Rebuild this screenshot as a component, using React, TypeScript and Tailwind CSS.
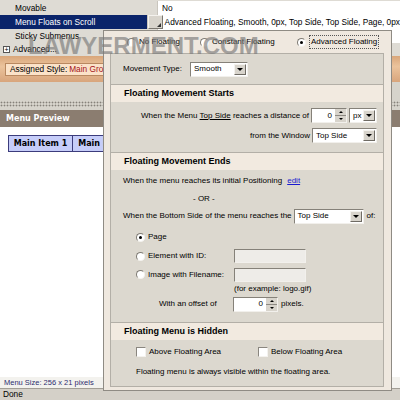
import React from "react";

// Sunken white radio dot, classic Windows look
function Radio({ checked }: { checked?: boolean }) {
  return (
    <span className="relative inline-block h-[9px] w-[9px] shrink-0 rounded-full border border-[#7f7b74] border-b-[#f4f2ee] border-r-[#f4f2ee] bg-white">
      {checked && (
        <span className="absolute left-[2px] top-[2px] h-[3px] w-[3px] rounded-full bg-black" />
      )}
    </span>
  );
}

function Checkbox() {
  return (
    <span className="inline-block h-[10px] w-[10px] shrink-0 border border-[#8a867f] border-b-[#f4f2ee] border-r-[#f4f2ee] bg-white" />
  );
}

function Arrow({ up }: { up?: boolean }) {
  return up ? (
    <span className="h-0 w-0 border-x-[2px] border-b-[2px] border-x-transparent border-b-black" />
  ) : (
    <span className="h-0 w-0 border-x-[3px] border-t-[3px] border-x-transparent border-t-black" />
  );
}

function Select({ value, className }: { value: string; className: string }) {
  return (
    <div
      className={`flex h-[15px] items-center border border-[#858179] border-b-[#f2f0ec] border-r-[#f2f0ec] bg-white ${className}`}
    >
      <span className="flex-1 truncate pl-[3px]">{value}</span>
      <span className="mr-[1px] flex h-[11px] w-[12px] items-center justify-center border border-[#f4f2ee] border-b-[#6f6b64] border-r-[#6f6b64] bg-[#d8d4cc]">
        <Arrow />
      </span>
    </div>
  );
}

function Spin({ className }: { className: string }) {
  return (
    <div
      className={`flex h-[15px] items-center border border-[#858179] border-b-[#f2f0ec] border-r-[#f2f0ec] bg-white ${className}`}
    >
      <span className="flex-1 pr-[3px] text-right">0</span>
      <span className="flex h-full w-[11px] flex-col bg-[#d8d4cc]">
        <span className="flex flex-1 items-center justify-center border-b border-[#8e8a83]">
          <Arrow up />
        </span>
        <span className="flex flex-1 items-center justify-center">
          <span className="h-0 w-0 border-x-[2px] border-t-[2px] border-x-transparent border-t-black" />
        </span>
      </span>
    </div>
  );
}

function TextBox() {
  return (
    <div className="h-[14px] w-[72px] border border-[#858179] border-b-[#f2f0ec] border-r-[#f2f0ec] bg-[#eeece8]" />
  );
}

function SectionHeader({ title }: { title: string }) {
  return (
    <div className="flex h-[18px] items-center border-t border-[#b3afa7] bg-[#f2eae0] pl-[13px] text-[9px] font-bold">
      {title}
    </div>
  );
}

function FloatingPopup() {
  return (
    <div className="absolute left-[103px] top-[30px] flex h-[361px] w-[289px] flex-col border border-[#8f8b84] bg-[#efe8df] text-[8px] text-black">
      {/* mode radios */}
      <div className="flex h-[22px] items-center pl-[23px]">
        <div className="flex w-[73px] items-center gap-[3px]">
          <Radio />
          <span>No Floating</span>
        </div>
        <div className="flex w-[97px] items-center gap-[3px]">
          <Radio />
          <span>Constant Floating</span>
        </div>
        <div className="flex items-center gap-[3px]">
          <Radio checked />
          <span className="border border-dotted border-[#555] px-[1px]">Advanced Floating</span>
        </div>
      </div>

      <div className="ml-[6px] mr-[7px] flex h-[334px] flex-col border border-[#b3afa7] bg-[#dcd8cf]">
        <div className="flex h-[30px] items-center pl-[12px]">
          <span className="w-[67px]">Movement Type:</span>
          <Select value="Smooth" className="w-[58px]" />
        </div>

        <SectionHeader title="Floating Movement Starts" />
        <div className="flex h-[50px] flex-col items-end gap-[5px] pr-[6px] pt-[6px]">
          <div className="flex items-center">
            <span className="mr-[2px]">
              When the Menu <span className="underline">Top Side</span> reaches a distance of
            </span>
            <Spin className="w-[36px]" />
            <Select value="px" className="ml-[2px] w-[28px]" />
          </div>
          <div className="flex items-center">
            <span className="mr-[2px]">from the Window</span>
            <Select value="Top Side" className="w-[65px]" />
          </div>
        </div>

        <SectionHeader title="Floating Movement Ends" />
        <div className="flex h-[152px] flex-col pl-[12px]">
          <div className="flex h-[22px] items-center">
            When the menu reaches its initial Positioning
            <span className="ml-[5px] text-[#1a1ad0] underline">edit</span>
          </div>
          <div className="flex h-[13px] items-center pl-[70px]">- OR -</div>
          <div className="flex h-[22px] items-center">
            <span className="mr-[2px]">When the Bottom Side of the menu reaches the</span>
            <Select value="Top Side" className="w-[70px]" />
            <span className="ml-[3px]">of:</span>
          </div>
          <div className="flex h-[20px] items-center gap-[3px] pl-[13px]">
            <Radio checked />
            <span>Page</span>
          </div>
          <div className="flex h-[18px] items-center pl-[13px]">
            <div className="flex w-[98px] items-center gap-[3px]">
              <Radio />
              <span>Element with ID:</span>
            </div>
            <TextBox />
          </div>
          <div className="flex h-[19px] items-center pl-[13px]">
            <div className="flex w-[98px] items-center gap-[3px]">
              <Radio />
              <span>Image with Filename:</span>
            </div>
            <TextBox />
          </div>
          <div className="flex h-[10px] items-center pl-[111px]">(for example: logo.gif)</div>
          <div className="flex h-[20px] items-center pl-[36px]">
            <span className="w-[74px]">With an offset of</span>
            <Spin className="w-[45px]" />
            <span className="ml-[3px]">pixels.</span>
          </div>
        </div>

        <SectionHeader title="Floating Menu is Hidden" />
        <div className="flex flex-1 flex-col pl-[25px]">
          <div className="flex h-[24px] items-center">
            <div className="flex w-[122px] items-center gap-[3px]">
              <Checkbox />
              <span>Above Floating Area</span>
            </div>
            <div className="flex items-center gap-[3px]">
              <Checkbox />
              <span>Below Floating Area</span>
            </div>
          </div>
          <div className="flex h-[16px] items-center">
            Floating menu is always visible within the floating area.
          </div>
        </div>
      </div>
    </div>
  );
}

function GridRow({
  name,
  children,
  selected,
}: {
  name: React.ReactNode;
  children?: React.ReactNode;
  selected?: boolean;
}) {
  return (
    <div className="flex h-[14px]">
      <div
        className={`flex w-[157px] items-center pl-[15px] ${
          selected ? "bg-[#0a246a] text-white" : ""
        }`}
      >
        {name}
      </div>
      <div className="flex flex-1 items-center border-l border-[#c9c5bd] bg-white">{children}</div>
    </div>
  );
}

export default function App() {
  return (
    <div className="relative h-[400px] w-[400px] overflow-hidden bg-white font-['Liberation_Sans',Arial,sans-serif] text-[8.3px] text-black">
      <div className="flex h-full flex-col">
        {/* property grid */}
        <div className="flex flex-col bg-[#dedbd4] pt-[1px]">
          <GridRow name="Movable">
            <span className="pl-[4px]">No</span>
          </GridRow>
          <GridRow name="Menu Floats on Scroll" selected>
            <span className="relative h-full w-[15px] border border-[#f4f2ee] border-b-[#7a766f] border-r-[#7a766f] bg-[#d8d4cc]">
              <span className="absolute bottom-[1px] right-[1px] h-0 w-0 border-l-[4px] border-t-[4px] border-l-transparent border-t-transparent border-b-0 border-r-0 [border-bottom:4px_solid_#333]" />
            </span>
            <span className="whitespace-nowrap pl-[2px]">
              Advanced Floating, Smooth, 0px, Top Side, Top Side, Page, 0px
            </span>
          </GridRow>
          <GridRow name="Sticky Submenus" />
          <div className="flex h-[13px] items-center">
            <span className="ml-[3px] mr-[3px] flex h-[7px] w-[7px] items-center justify-center border border-[#555] bg-white text-[7px] leading-none">
              +
            </span>
            <span>Advanced...</span>
          </div>
        </div>

        {/* assigned style band */}
        <div className="flex h-[26px] items-center bg-[linear-gradient(#d9a67a,#ebc39c_40%,#d8a57c)] pl-[5px]">
          <div className="flex h-[13px] w-[140px] items-center border border-[#b88860] bg-[#fbe2c8] pl-[4px]">
            Assigned Style: <span className="ml-[2px] text-[#a3151a]">Main Group</span>
          </div>
        </div>
        <div className="h-[16px] bg-[#d6d3cb]" />
        <div className="flex h-[12px] items-center bg-[#d6d3cb]">
          <div className="h-[6px] w-full bg-[radial-gradient(circle,#85817a_0.8px,transparent_1.1px)] bg-[length:3px_3px]" />
        </div>
        <div className="flex h-[17px] items-center bg-[#8b7d70] pl-[6px] font-['DejaVu_Sans',Verdana,sans-serif] text-[8px] font-bold text-white">
          Menu Preview
        </div>

        {/* preview canvas */}
        <div className="flex-1 bg-white pl-[8px] pt-[8px]">
          <div className="flex font-['DejaVu_Sans',Verdana,sans-serif] text-[8px] font-bold">
            <div className="flex h-[17px] w-[65px] items-center justify-center border border-[#3c3c7c] bg-[#c6cdf9]">
              Main Item 1
            </div>
            <div className="flex h-[17px] w-[65px] items-center justify-center border border-l-0 border-[#3c3c7c] bg-[#c6cdf9]">
              Main Item 2
            </div>
          </div>
        </div>
        <div className="flex h-[11px] items-center bg-[#f3f2ee] pl-[4px] text-[7.5px] text-[#2d2d6e]">
          Menu Size: 256 x 21 pixels
        </div>
        <div className="flex h-[12px] items-center border-t border-[#a29e96] bg-[#d4d0c8] pl-[3px]">
          Done
        </div>
      </div>

      <FloatingPopup />

      <div className="pointer-events-none absolute left-[28px] top-[34px] whitespace-nowrap text-[24px] font-bold leading-none text-[#7b7b7b] opacity-65">
        LAWYERMENT.COM
      </div>
    </div>
  );
}
